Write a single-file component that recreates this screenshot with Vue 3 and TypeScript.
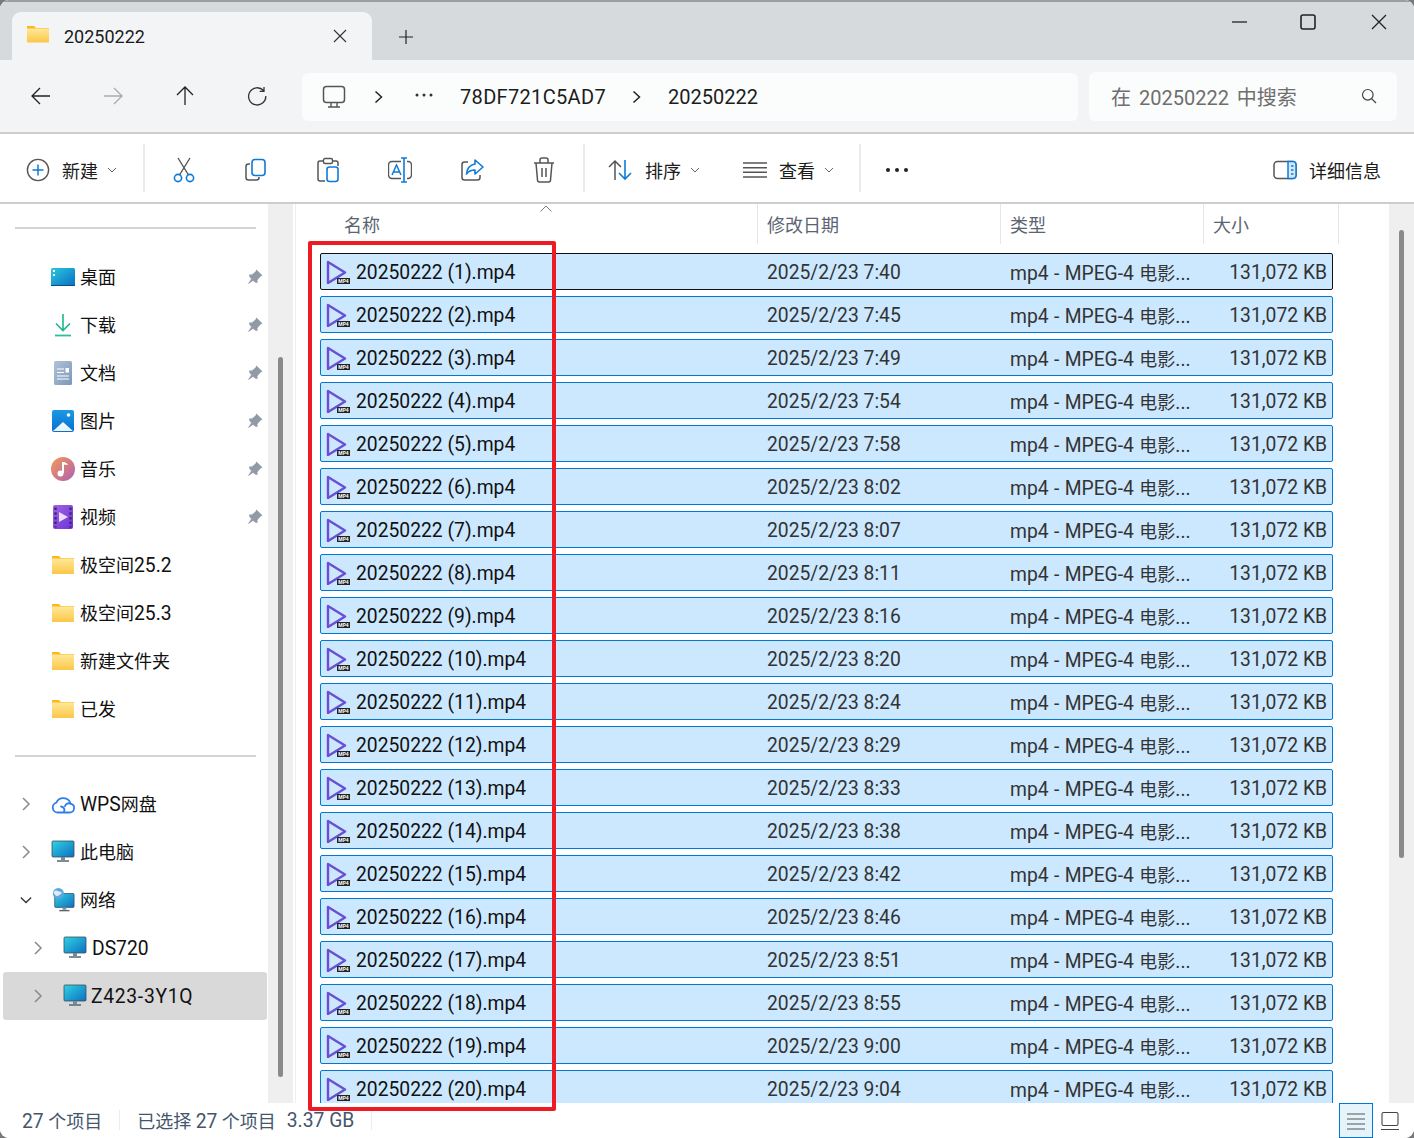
<script setup lang="ts">
interface NavItem {
  label: string
  latin?: string
  icon: string
  pinned?: boolean
}

const quickItems: NavItem[] = [
  { label: '桌面', icon: 'desktop', pinned: true },
  { label: '下载', icon: 'download', pinned: true },
  { label: '文档', icon: 'doc', pinned: true },
  { label: '图片', icon: 'picture', pinned: true },
  { label: '音乐', icon: 'music', pinned: true },
  { label: '视频', icon: 'video', pinned: true },
  { label: '极空间', latin: '25.2', icon: 'folder' },
  { label: '极空间', latin: '25.3', icon: 'folder' },
  { label: '新建文件夹', icon: 'folder' },
  { label: '已发', icon: 'folder' },
]

const times = ['7:40', '7:45', '7:49', '7:54', '7:58', '8:02', '8:07', '8:11', '8:16', '8:20', '8:24', '8:29', '8:33', '8:38', '8:42', '8:46', '8:51', '8:55', '9:00', '9:04']
const files = times.map((t, i) => ({
  name: `20250222 (${i + 1}).mp4`,
  date: `2025/2/23 ${t}`,
}))
</script>

<template>
  <div class="screen">
    <div class="window">
      <header class="titlebar">
        <div class="tab">
          <svg class="folder-tab" viewBox="0 0 24 18">
            <path d="M1 1h7l2 2h13v14H1z" fill="#fbb91f" />
            <rect x="1" y="3.5" width="22" height="14" fill="url(#fg)" />
            <defs>
              <linearGradient id="fg" x1="0" y1="0" x2="0" y2="1">
                <stop offset="0" stop-color="#ffe89a" />
                <stop offset="1" stop-color="#fcc647" />
              </linearGradient>
            </defs>
          </svg>
          <span class="tab-title">20250222</span>
          <svg class="tab-close" viewBox="0 0 14 14"><path d="M1 1l12 12M13 1L1 13" stroke="#333" stroke-width="1.1" fill="none" /></svg>
        </div>
        <svg class="tab-add" viewBox="0 0 16 16"><path d="M8 1v14M1 8h14" stroke="#222" stroke-width="1.2" fill="none" /></svg>
        <div class="controls">
          <svg class="ctl ctl-min" viewBox="0 0 16 16"><path d="M0 8h15" stroke="#222" stroke-width="1.3" /></svg>
          <svg class="ctl ctl-max" viewBox="0 0 16 16"><rect x="1" y="1" width="14" height="14" rx="2" fill="none" stroke="#222" stroke-width="1.6" /></svg>
          <svg class="ctl ctl-close" viewBox="0 0 16 16"><path d="M1 1l14 14M15 1L1 15" stroke="#222" stroke-width="1.3" /></svg>
        </div>
      </header>

      <nav class="navbar">
        <button class="nav-btn">
          <svg viewBox="0 0 20 20"><path d="M19 10H1M9 2l-8 8 8 8" fill="none" stroke="#222" stroke-width="1.3" /></svg>
        </button>
        <button class="nav-btn">
          <svg viewBox="0 0 20 20"><path d="M1 10h18M11 2l8 8-8 8" fill="none" stroke="#a9abad" stroke-width="1.3" /></svg>
        </button>
        <button class="nav-btn">
          <svg viewBox="0 0 20 20"><path d="M10 19V1M2 9l8-8 8 8" fill="none" stroke="#222" stroke-width="1.3" /></svg>
        </button>
        <button class="nav-btn">
          <svg viewBox="0 0 20 20"><path d="M16.5 4.5A8.6 8.6 0 1 0 18.8 10M17 1v4.4h-4.4" fill="none" stroke="#333" stroke-width="1.3" /></svg>
        </button>
        <div class="address">
          <svg class="addr-pc" viewBox="0 0 24 24"><rect x="1.5" y="1.5" width="21" height="16" rx="3" fill="none" stroke="#555" stroke-width="1.5" /><path d="M9 17.5v4M15 17.5v4M6 22h12" stroke="#555" stroke-width="1.4" fill="none" /></svg>
          <svg class="addr-chev first" viewBox="0 0 12 14"><path d="M2.500 1.500L8.500 7l-6 5.500" fill="none" stroke="#222" stroke-width="1.5" /></svg>
          <svg class="addr-dots" viewBox="0 0 24 6"><circle cx="5" cy="3" r="1.5" fill="#333" /><circle cx="12" cy="3" r="1.5" fill="#333" /><circle cx="19" cy="3" r="1.5" fill="#333" /></svg>
          <span class="addr-text crumb-a">78DF721C5AD7</span>
          <svg class="addr-chev second" viewBox="0 0 12 14"><path d="M2.500 1.500L8.500 7l-6 5.500" fill="none" stroke="#222" stroke-width="1.5" /></svg>
          <span class="addr-text crumb-b">20250222</span>
        </div>
        <div class="search">
          <span class="search-text">在 20250222 中搜索</span>
          <svg class="search-icon" viewBox="0 0 16 16"><circle cx="6.8" cy="6.8" r="5.3" fill="none" stroke="#444" stroke-width="1.2" /><path d="M10.6 10.6L15 15" stroke="#444" stroke-width="1.3" /></svg>
        </div>
      </nav>

      <div class="toolbar">
        <svg class="t-icon new-icon" viewBox="0 0 24 24"><circle cx="12" cy="12" r="10.6" fill="none" stroke="#555" stroke-width="1.4" /><path d="M12 6.5v11M6.5 12h11" stroke="#0f7ad6" stroke-width="1.5" /></svg>
        <span class="t-label new-label">新建</span>
        <svg class="t-chev" viewBox="0 0 10 6"><path d="M1 1l4 4 4-4" fill="none" stroke="#666" stroke-width="1" /></svg>
        <i class="t-sep sep-a"></i>
        <button class="t-btn">
          <svg viewBox="0 0 24 26"><path d="M6 1l10.5 17M18 1L7.5 18" fill="none" stroke="#555" stroke-width="1.4" /><circle cx="6" cy="21" r="3.6" fill="none" stroke="#0f7ad6" stroke-width="1.6" /><circle cx="18" cy="21" r="3.6" fill="none" stroke="#0f7ad6" stroke-width="1.6" /></svg>
        </button>
        <button class="t-btn">
          <svg viewBox="0 0 24 24"><path d="M6 6H4.5A2.5 2.5 0 0 0 2 8.5v11A2.5 2.5 0 0 0 4.5 22h8a2.5 2.5 0 0 0 2.5-2.5V19" fill="none" stroke="#555" stroke-width="1.5" /><rect x="8" y="1.5" width="13" height="16" rx="3" fill="none" stroke="#0f7ad6" stroke-width="1.6" /></svg>
        </button>
        <button class="t-btn">
          <svg viewBox="0 0 24 26"><path d="M7 4H4a2 2 0 0 0-2 2v16a2 2 0 0 0 2 2h5M17 4h3a2 2 0 0 1 2 2v3" fill="none" stroke="#555" stroke-width="1.5" /><rect x="7.5" y="1.5" width="9" height="5" rx="1.5" fill="none" stroke="#555" stroke-width="1.4" /><rect x="11" y="10" width="11" height="14.5" rx="2.5" fill="none" stroke="#0f7ad6" stroke-width="1.6" /></svg>
        </button>
        <button class="t-btn">
          <svg viewBox="0 0 24 26"><path d="M13 4.500H4a3.500 3.500 0 0 0-3.500 3.500v10A3.500 3.500 0 0 0 4 21.500h9M19 4.500h1a3.500 3.500 0 0 1 3.500 3.500v10a3.500 3.500 0 0 1-3.500 3.500h-1" fill="none" stroke="#555" stroke-width="1.400" /><path d="M16 1v24M13 1h6M13 25h6" fill="none" stroke="#0f7ad6" stroke-width="1.600" /><path d="M4 18l4.500-10L13 18M5.500 15h6" fill="none" stroke="#0f7ad6" stroke-width="1.500" /></svg>
        </button>
        <button class="t-btn">
          <svg viewBox="0 0 24 24"><path d="M8 4H4.5A2.5 2.5 0 0 0 2 6.5v13A2.5 2.5 0 0 0 4.500 22h13a2.500 2.500 0 0 0 2.500-2.500V17" fill="none" stroke="#555" stroke-width="1.500" /><path d="M15 2l8 7-8 7v-4c-4 0-6.500 1-8.500 4 .5-5.500 3.500-9 8.500-10z" fill="none" stroke="#0f7ad6" stroke-width="1.6" stroke-linejoin="round" /></svg>
        </button>
        <button class="t-btn">
          <svg viewBox="0 0 24 26"><path d="M2 6h20M8 6V3a2 2 0 0 1 2-2h4a2 2 0 0 1 2 2v3M4 6l1.500 17a2 2 0 0 0 2 2h9a2 2 0 0 0 2-2L20 6M10 11v9M14 11v9" fill="none" stroke="#555" stroke-width="1.5" /></svg>
        </button>
        <i class="t-sep sep-b"></i>
        <svg class="t-icon sort-icon" viewBox="0 0 24 24"><path d="M7 22V3M1 9l6-6 6 6" fill="none" stroke="#555" stroke-width="1.5" /><path d="M17 2v19M11 15l6 6 6-6" fill="none" stroke="#0f7ad6" stroke-width="1.6" /></svg>
        <span class="t-label sort-label">排序</span>
        <svg class="t-chev" viewBox="0 0 10 6"><path d="M1 1l4 4 4-4" fill="none" stroke="#666" stroke-width="1" /></svg>
        <svg class="t-icon view-icon" viewBox="0 0 24 24"><path d="M0 5h24M0 9.700h24M0 14.300h24M0 19h24" stroke="#555" stroke-width="1.4" /></svg>
        <span class="t-label view-label">查看</span>
        <svg class="t-chev" viewBox="0 0 10 6"><path d="M1 1l4 4 4-4" fill="none" stroke="#666" stroke-width="1" /></svg>
        <i class="t-sep sep-c"></i>
        <svg class="t-icon more-icon" viewBox="0 0 24 6"><circle cx="3" cy="3" r="2" fill="#222" /><circle cx="12" cy="3" r="2" fill="#222" /><circle cx="21" cy="3" r="2" fill="#222" /></svg>
        <svg class="t-icon details-icon" viewBox="0 0 24 20"><rect x="1" y="1.500" width="22" height="17" rx="3.500" fill="none" stroke="#555" stroke-width="1.500" /><path d="M15 1.500h5a3 3 0 0 1 3 3v11a3 3 0 0 1-3 3h-5z" fill="#d5e9fa" stroke="#0f7ad6" stroke-width="1.500" /><path d="M18 6h2.500M18 10h2.500M18 14h2.500" stroke="#0f7ad6" stroke-width="1.300" /></svg>
        <span class="t-label details-label">详细信息</span>
      </div>

      <main class="main">
        <aside class="sidebar">
          <i class="side-rule rule-a"></i>
          <div v-for="item in quickItems" :key="item.label + item.latin" class="side-row">
            <span class="chev-slot"></span>
            <span class="side-icon">
              <svg v-if="item.icon === 'desktop'" viewBox="0 0 24 24">
                <defs><linearGradient id="dk" x1="0" y1="0" x2="1" y2="1"><stop offset="0" stop-color="#29c8e0" /><stop offset="1" stop-color="#0a6fc2" /></linearGradient></defs>
                <rect y="3" width="24" height="18" rx="1.500" fill="url(#dk)" />
                <rect x="2" y="5" width="2" height="2" fill="#fff" /><rect x="2" y="9" width="2" height="2" fill="#fff" />
                <rect y="20" width="24" height="1" fill="#0b4c86" />
              </svg>
              <svg v-else-if="item.icon === 'download'" viewBox="0 0 24 24">
                <path d="M12 1v16M5 10.500l7 7 7-7" fill="none" stroke="#1fb592" stroke-width="1.600" /><path d="M4 22.500h16" stroke="#2cbd9e" stroke-width="1.800" />
              </svg>
              <svg v-else-if="item.icon === 'doc'" viewBox="0 0 24 24">
                <defs><linearGradient id="dc" x1="0" y1="0" x2="1" y2="1"><stop offset="0" stop-color="#b2c3d8" /><stop offset="1" stop-color="#7b96b8" /></linearGradient></defs>
                <rect x="3" width="18" height="24" rx="1.500" fill="url(#dc)" />
                <path d="M6 8h7M6 11.500h7M6 15h12M6 18h12" stroke="#fff" stroke-width="1.100" /><rect x="14.500" y="7" width="3.500" height="4.500" fill="#fff" />
              </svg>
              <svg v-else-if="item.icon === 'picture'" viewBox="0 0 24 24">
                <defs><linearGradient id="pc" x1="0" y1="0" x2="0" y2="1"><stop offset="0" stop-color="#1b9ae4" /><stop offset="1" stop-color="#0a6fcf" /></linearGradient></defs>
                <rect x="1" y="1" width="22" height="22" rx="2" fill="url(#pc)" />
                <path d="M2 22l10-9 10 9z" fill="#eaf5fd" /><circle cx="17.500" cy="6" r="1.800" fill="#fff" />
              </svg>
              <svg v-else-if="item.icon === 'music'" viewBox="0 0 24 24">
                <defs><linearGradient id="ms" x1="0" y1="0" x2="1" y2="1"><stop offset="0" stop-color="#f49a55" /><stop offset="1" stop-color="#b05fb5" /></linearGradient></defs>
                <circle cx="12" cy="12" r="12" fill="url(#ms)" />
                <path d="M12 5v11" stroke="#fff" stroke-width="2" /><path d="M12 5c2 0 4 1 5 3l-5-.500z" fill="#fff" /><circle cx="9.500" cy="16.500" r="3" fill="#fff" />
              </svg>
              <svg v-else-if="item.icon === 'video'" viewBox="0 0 24 24">
                <defs><linearGradient id="vd" x1="0" y1="0" x2="1" y2="1"><stop offset="0" stop-color="#9f63e3" /><stop offset="1" stop-color="#6f33d8" /></linearGradient></defs>
                <rect x="2" width="20" height="24" rx="2" fill="url(#vd)" />
                <path d="M8 7l9 5-9 5z" fill="#e9ddfa" />
                <path d="M4.500 2.500v20M19.500 2.500v20" stroke="#3f2a72" stroke-width="2.400" stroke-dasharray="2.500 2.200" />
              </svg>
              <svg v-else viewBox="0 0 24 24">
                <path d="M1 3h7l2 2h13v16H1z" fill="#fbb91f" />
                <rect x="1" y="5.500" width="22" height="15.500" fill="url(#fg)" />
              </svg>
            </span>
            <span class="side-label cjk-up">{{ item.label }}<span v-if="item.latin" class="latin">{{ item.latin }}</span></span>
            <svg v-if="item.pinned" class="pin" viewBox="0 0 16 16">
              <path d="M9.500 0.500L15.500 6.500 13.500 7.500 10.500 11 10.500 14 8 13.500 2.500 8 2 5.500 5 5.500 8.500 2.500z" fill="#929ba5" /><path d="M4.500 9.500L0.500 15.500 6.500 11.500z" fill="#929ba5" />
            </svg>
          </div>
          <i class="side-rule rule-b"></i>
          <div class="side-row">
            <svg class="chev" viewBox="0 0 12 14"><path d="M3 1l6 6-6 6" fill="none" stroke="#8a8a8a" stroke-width="1.500" /></svg>
            <span class="side-icon">
              <svg viewBox="0 0 24 24"><path d="M7 20.500h11.500a4.500 4.500 0 0 0 1-8.900A7.500 7.500 0 0 0 5.400 10.700 5 5 0 0 0 7 20.500h4.500c2.500 0 3-5.500-1.500-6" fill="none" stroke="#2f7fe8" stroke-width="1.800" stroke-linecap="round" stroke-linejoin="round" /><path d="M19.500 11.600a4 4 0 0 0-5.500 2.600" fill="none" stroke="#2f7fe8" stroke-width="1.800" stroke-linecap="round" /></svg>
            </span>
            <span class="side-label cjk-up"><span class="latin">WPS</span>网盘</span>
          </div>
          <div class="side-row">
            <svg class="chev" viewBox="0 0 12 14"><path d="M3 1l6 6-6 6" fill="none" stroke="#8a8a8a" stroke-width="1.500" /></svg>
            <span class="side-icon">
              <svg viewBox="0 0 24 24">
                <defs><linearGradient id="pcg" x1="0" y1="0" x2="1" y2="1"><stop offset="0" stop-color="#2fd3e3" /><stop offset="1" stop-color="#0d6fc0" /></linearGradient></defs>
                <rect x="1" y="1" width="22" height="16" rx="1" fill="url(#pcg)" stroke="#3a4b5a" stroke-width=".8" /><path d="M10 17h4v3h-4z" fill="#7b8a96" /><path d="M6 21h12" stroke="#566470" stroke-width="1.500" />
              </svg>
            </span>
            <span class="side-label cjk-up">此电脑</span>
          </div>
          <div class="side-row">
            <svg class="chev chev-open" viewBox="0 0 14 12"><path d="M1 3l6 6 6-6" fill="none" stroke="#333" stroke-width="1.500" /></svg>
            <span class="side-icon">
              <svg viewBox="0 0 24 26">
                <rect x="3" y="6" width="21" height="15" rx="1" fill="url(#pcg)" stroke="#3a4b5a" stroke-width=".8" /><path d="M11.500 21h4v2.500h-4z" fill="#7b8a96" /><path d="M8 24.500h11" stroke="#566470" stroke-width="1.500" />
                <circle cx="7" cy="6" r="6" fill="#5aa7dc" /><path d="M3 3c3-1 4 1 6 1s2 2 0 3-3 3-5 1-3-3-1-5z" fill="#dfeaf2" />
              </svg>
            </span>
            <span class="side-label cjk-up">网络</span>
          </div>
          <div class="side-row sub">
            <svg class="chev" viewBox="0 0 12 14"><path d="M3 1l6 6-6 6" fill="none" stroke="#8a8a8a" stroke-width="1.500" /></svg>
            <span class="side-icon">
              <svg viewBox="0 0 24 24"><rect x="1" y="1" width="22" height="16" rx="1" fill="url(#pcg)" stroke="#3a4b5a" stroke-width=".8" /><path d="M10 17h4v3h-4z" fill="#7b8a96" /><path d="M6 21h12" stroke="#566470" stroke-width="1.500" /></svg>
            </span>
            <span class="side-label latin">DS720</span>
          </div>
          <div class="side-row sub selected">
            <svg class="chev" viewBox="0 0 12 14"><path d="M3 1l6 6-6 6" fill="none" stroke="#8a8a8a" stroke-width="1.500" /></svg>
            <span class="side-icon">
              <svg viewBox="0 0 24 24"><rect x="1" y="1" width="22" height="16" rx="1" fill="url(#pcg)" stroke="#3a4b5a" stroke-width=".8" /><path d="M10 17h4v3h-4z" fill="#7b8a96" /><path d="M6 21h12" stroke="#566470" stroke-width="1.500" /></svg>
            </span>
            <span class="side-label latin wide">Z423-3Y1Q</span>
          </div>
        </aside>
        <div class="track track-left"><div class="thumb thumb-left"></div></div>

        <section class="pane">
          <div class="head">
            <svg class="sort-caret" viewBox="0 0 12 7"><path d="M.5 6.500L6 1l5.500 5.500" fill="none" stroke="#777" stroke-width="1" /></svg>
            <span class="hcell h-name">名称</span>
            <span class="hcell">修改日期</span>
            <span class="hcell">类型</span>
            <span class="hcell">大小</span>
          </div>
          <div class="rows">
            <div v-for="(f, i) in files" :key="f.name" class="row" :class="{ focused: i === 0 }">
              <div class="c-name">
                <svg class="file-icon" viewBox="0 0 24 24">
                  <path d="M2 2L19 12.500 2 23z" fill="none" stroke="#6a4ed6" stroke-width="2.400" stroke-linejoin="round" />
                  <rect x="11" y="18" width="13" height="6" fill="#222" />
                  <text x="17.500" y="23" class="mp4-tag" text-anchor="middle">MP4</text>
                </svg>
                <span class="fname">{{ f.name }}</span>
              </div>
              <div class="c-date">{{ f.date }}</div>
              <div class="c-type">mp4 - MPEG-4 <span class="cjk">电影</span>...</div>
              <div class="c-size">131,072 KB</div>
            </div>
          </div>
        </section>
        <div class="track track-right"><div class="thumb thumb-right"></div></div>
      </main>

      <footer class="status">
        <span class="st-count"><span class="latin">27</span> 个项目</span>
        <i class="st-sep"></i>
        <span class="st-sel">已选择 <span class="latin">27</span> 个项目</span>
        <span class="st-size latin">3.37 GB</span>
        <i class="st-sep st-sep-b"></i>
        <button class="view-btn active">
          <svg viewBox="0 0 20 20"><path d="M1 3h18M1 8h18M1 13h18M1 18h18" stroke="#555" stroke-width="1.100" /></svg>
        </button>
        <button class="view-btn">
          <svg viewBox="0 0 20 20"><rect x="2" y="1.500" width="16" height="13" rx="1.500" fill="none" stroke="#444" stroke-width="1.100" /><path d="M1 18.500h18" stroke="#444" stroke-width="1.100" /></svg>
        </button>
      </footer>

      <div class="annotation"></div>
    </div>
  </div>
</template>

<style>
html, body { margin: 0; background: #fff; }
</style>

<style scoped>
.screen {
  width: 1414px;
  height: 1138px;
  background: #77797b;
  overflow: hidden;
  font-family: "Roboto", "Noto Sans CJK SC", sans-serif;
  color: #111;
}
.window {
  position: relative;
  width: 1414px;
  height: 1138px;
  background: #fff;
  border-radius: 9px;
  overflow: hidden;
  display: flex;
  flex-direction: column;
}
svg { display: block; flex: none; }
button { border: 0; background: none; padding: 0; margin: 0; display: flex; align-items: center; justify-content: center; }
i { display: block; flex: none; }
.latin { font-size: 19.3px; }
.cjk { font-size: 18px; }

/* title bar */
.titlebar {
  height: 60px;
  box-sizing: border-box;
  flex: none;
  background: #d6dadd;
  border-top: 2px solid #9b9ea1;
  display: flex;
  align-items: flex-end;
}
.tab {
  width: 360px;
  height: 48px;
  margin-left: 12px;
  background: #f3f4f6;
  border-radius: 9px 9px 0 0;
  display: flex;
  align-items: center;
  box-sizing: border-box;
  padding: 0 25px 0 14px;
}
.folder-tab { width: 24px; height: 18px; margin-top: -4px; }
.tab-title { margin-left: 14px; font-size: 18px; color: #1a1a1a; }
.tab-close { width: 14px; height: 14px; margin-left: auto; margin-top: -1px; }
.tab-add { width: 16px; height: 16px; margin: 0 0 15px 26px; }
.controls { margin-left: auto; height: 46px; display: flex; align-items: flex-start; }
.ctl { width: 16px; height: 16px; }
.ctl-min { margin-right: 52px; }
.ctl-max { margin-right: 55px; }
.ctl-close { margin-right: 27px; }

/* nav bar */
.navbar {
  height: 74px;
  flex: none;
  box-sizing: border-box;
  background: #f3f4f6;
  border-bottom: 2px solid #cdcdcd;
  padding: 0 17px 0 5px;
  display: flex;
  align-items: center;
}
.nav-btn { width: 72px; height: 48px; }
.nav-btn svg { width: 20px; height: 20px; }
.address {
  width: 776px;
  height: 48px;
  margin-left: 9px;
  margin-top: 1px;
  background: #fbfcfc;
  border-radius: 6px;
  display: flex;
  align-items: center;
  box-sizing: border-box;
  padding-left: 20px;
}
.addr-pc { width: 24px; height: 24px; }
.addr-chev { width: 12px; height: 14px; }
.addr-chev.first { margin-left: 27px; }
.addr-chev.second { margin-left: 25px; }
.addr-dots { width: 24px; height: 6px; margin: -4px 0 0 27px; }
.addr-text { font-size: 20px; color: #1c1c1c; }
.crumb-a { margin-left: 24px; letter-spacing: 0.33px; }
.crumb-b { margin-left: 25px; }
.search {
  width: 308px;
  height: 49px;
  margin-left: 11px;
  background: #fbfcfc;
  border-radius: 6px;
  display: flex;
  align-items: center;
  box-sizing: border-box;
  padding: 0 20px 0 22px;
}
.search-text { font-size: 20px; color: #6e6e6e; word-spacing: 3px; }
.search-icon { width: 16px; height: 16px; margin-left: auto; }

/* toolbar */
.toolbar {
  height: 70px;
  flex: none;
  box-sizing: border-box;
  border-bottom: 2px solid #cdcdcd;
  padding: 4px 33px 0 26px;
  display: flex;
  align-items: center;
  background: #fff;
}
.t-icon { width: 24px; height: 24px; }
.t-label { font-size: 18px; color: #1c1c1c; flex: none; margin-top: -1px; }
.new-label { margin-left: 12px; }
.t-chev { width: 10px; height: 6px; margin-left: 9px; }
.t-sep { width: 2px; height: 48px; background: #ebebeb; margin-top: -4px; }
.sep-a { margin-left: 26px; margin-right: 3px; }
.sep-b { margin-left: 3px; }
.t-btn { width: 72px; height: 48px; }
.t-btn svg { width: 24px; height: 26px; }
.sort-icon { margin-left: 23px; }
.sort-label { margin-left: 13px; }
.view-icon { margin-left: 43px; }
.view-label { margin-left: 12px; }
.sep-c { margin-left: 25px; }
.more-icon { height: 6px; margin-left: 24px; }
.details-icon { margin-left: auto; height: 20px; }
.details-label { margin-left: 12px; }

/* main */
.main { height: 899px; flex: none; display: flex; overflow: hidden; }
.sidebar { width: 268px; flex: none; padding-top: 23px; box-sizing: border-box; }
.side-rule { height: 2px; background: #d4d4d4; margin-left: 15px; width: 241px; }
.rule-a { margin-bottom: 24px; }
.rule-b { margin-top: 22px; margin-bottom: 23px; }
.side-row {
  height: 48px;
  margin-left: 3px;
  margin-right: 1px;
  padding: 0 4px 0 17px;
  display: flex;
  align-items: center;
  border-radius: 3px;
}
.side-row.sub { padding-left: 29px; }
.side-row.selected { background: #d9d9d9; }
.chev-slot { width: 12px; height: 14px; flex: none; margin-right: 19px; }
.chev { width: 12px; height: 14px; margin-right: 19px; }
.chev-open { height: 12px; }
.side-icon { width: 24px; height: 24px; flex: none; }
.side-icon svg { width: 24px; height: 24px; }
.side-label { margin-left: 5px; font-size: 18px; color: #111; }
.side-label.latin { font-size: 19.3px; }
.side-label.wide { letter-spacing: 0.7px; margin-left: 4px; }
.cjk-up { margin-top: -3px; }
.pin { width: 16px; height: 16px; margin-left: auto; }

.track { width: 25px; flex: none; background: #efefef; }
.thumb { width: 5px; margin-left: 10px; background: #8a8a8a; border-radius: 3px; }
.thumb-left { margin-top: 153px; height: 720px; }
.thumb-right { margin-top: 26px; height: 628px; }

.pane { flex: 1; margin-left: 2px; border-left: 1px solid #efefef; min-width: 0; }
.head { position: relative; height: 40px; display: grid; grid-template-columns: 462px 243px 203px 135px; }
.hcell {
  font-size: 18px;
  color: #5b6572;
  padding-left: 9px;
  border-right: 1px solid #e6e6e6;
  display: flex;
  align-items: center;
}
.h-name { padding-left: 48px; }
.sort-caret { position: absolute; left: 244px; top: 1px; width: 12px; height: 7px; }
.rows { margin: 9px 0 0 24px; }
.row {
  width: 1013px;
  height: 37px;
  margin-bottom: 6px;
  box-sizing: border-box;
  background: #cce8ff;
  border: 1px solid #0078d4;
  border-radius: 2px;
  display: grid;
  grid-template-columns: 436px 243px 203px 129px;
  align-items: center;
  font-size: 19.3px;
  color: #333;
}
.row.focused { border-color: #111; }
.c-name { display: flex; align-items: center; padding-left: 5px; }
.file-icon { width: 24px; height: 24px; }
.fname { margin-left: 6px; color: #111; white-space: nowrap; padding-top: 2px; }
.c-date, .c-type { padding-left: 10px; white-space: nowrap; }
.c-date { padding-top: 2px; }
.c-type { word-spacing: 0.6px; }
.c-size { text-align: right; padding: 2px 5px 0 0; white-space: nowrap; }
.mp4-tag { font-size: 5px; fill: #fff; font-family: "Roboto", sans-serif; font-weight: 700; }

/* status */
.status {
  flex: 1;
  display: flex;
  align-items: center;
  padding: 0 7px 1px 22px;
  font-size: 18px;
  color: #44566c;
  background: #fff;
}
.st-sep { width: 1px; height: 20px; background: #ececec; margin: 0 17px; }
.st-size { margin-left: 11px; }
.st-sep-b { margin-right: 0; }
.view-btn { width: 34px; height: 35px; flex: none; box-sizing: border-box; margin-bottom: -1px; }
.view-btn svg { width: 20px; height: 20px; }
.view-btn.active { margin-left: auto; background: #e5f3fb; border: 1px solid #0078d4; }

.annotation {
  position: absolute;
  left: 308px;
  top: 241px;
  width: 248px;
  height: 870px;
  box-sizing: border-box;
  border: 4px solid #ed1c24;
  border-radius: 2px;
  pointer-events: none;
}
</style>
